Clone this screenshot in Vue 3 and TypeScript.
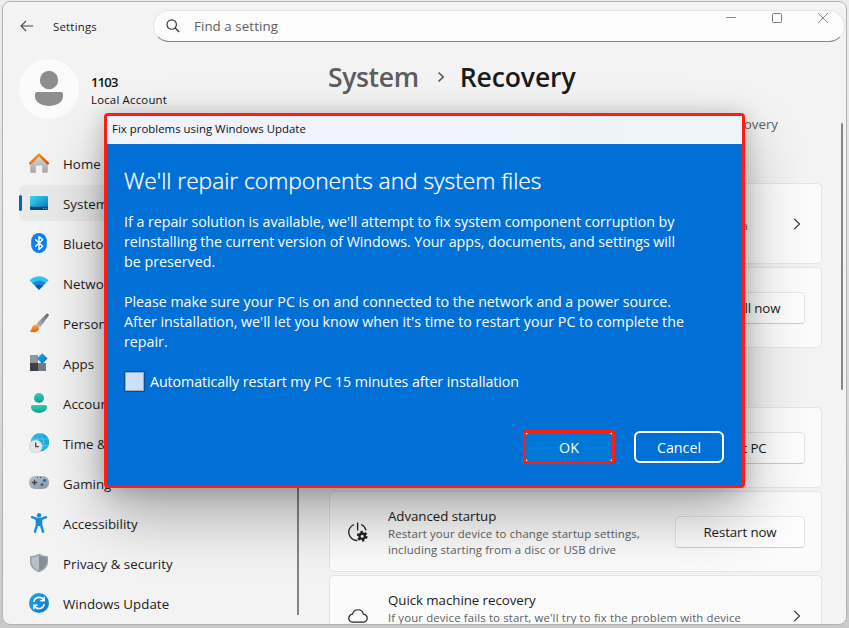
<script setup lang="ts">
interface NavItem {
  id: string
  label: string
  active?: boolean
}

interface RecoveryCard {
  id: string
  title: string
  lines: string[]
  action?: string
}

const navItems: NavItem[] = [
  { id: 'home', label: 'Home' },
  { id: 'system', label: 'System', active: true },
  { id: 'bluetooth', label: 'Bluetooth & devices' },
  { id: 'network', label: 'Network & internet' },
  { id: 'personal', label: 'Personalization' },
  { id: 'apps', label: 'Apps' },
  { id: 'accounts', label: 'Accounts' },
  { id: 'time', label: 'Time & language' },
  { id: 'gaming', label: 'Gaming' },
  { id: 'access', label: 'Accessibility' },
  { id: 'privacy', label: 'Privacy & security' },
  { id: 'update', label: 'Windows Update' },
]

const topCards: RecoveryCard[] = [
  {
    id: 'fix',
    title: 'Fix problems without resetting your PC',
    lines: ['Resetting can take a while. First, try resolving issues by running a', 'troubleshooter'],
  },
  {
    id: 'reinstall',
    title: 'Fix problems using Windows Update',
    lines: ['Reinstall your current version of', 'Windows'],
    action: 'Reinstall now',
  },
]

const bottomCards: RecoveryCard[] = [
  {
    id: 'reset',
    title: 'Reset this PC',
    lines: ['Choose to keep or remove your files,', 'then reinstall Windows'],
    action: 'Reset PC',
  },
  {
    id: 'advanced',
    title: 'Advanced startup',
    lines: ['Restart your device to change startup settings,', 'including starting from a disc or USB drive'],
    action: 'Restart now',
  },
  {
    id: 'quick',
    title: 'Quick machine recovery',
    lines: ["If your device fails to start, we'll try to fix the problem with device"],
  },
]

const groups: RecoveryCard[][] = [topCards, bottomCards]
</script>

<template>
  <div class="desktop">
    <div class="window">
      <header class="titlebar">
        <svg class="back" width="14" height="12" viewBox="0 0 14 12">
          <path d="M6 1 1 6l5 5M1 6h12.2" fill="none" stroke="#4a4a4a" stroke-width="1.1" />
        </svg>
        <span class="app-name">Settings</span>
        <div class="search">
          <svg width="14" height="14" viewBox="0 0 14 14">
            <circle cx="5.7" cy="5.5" r="4.7" fill="none" stroke="#333" stroke-width="1.15" />
            <path d="m9.2 9 4 4" stroke="#333" stroke-width="1.2" />
          </svg>
          <span>Find a setting</span>
        </div>
      </header>

      <div class="controls">
        <svg width="10" height="10" viewBox="0 0 10 10"><path d="M0 4.5h10" stroke="#8a8a8a" /></svg>
        <svg width="10" height="10" viewBox="0 0 10 10">
          <rect x=".5" y=".5" width="9" height="9" rx="1" fill="none" stroke="#7c7c7c" />
        </svg>
        <svg width="10" height="10" viewBox="0 0 10 10"><path d="m0 0 10 10M10 0 0 10" stroke="#8a8a8a" /></svg>
      </div>

      <div class="body">
        <aside class="sidebar">
          <div class="profile">
            <svg width="60" height="60" viewBox="0 0 60 60">
              <circle cx="30" cy="30" r="30" fill="#fbfbfb" />
              <circle cx="30" cy="21" r="9.2" fill="#8e8e8e" />
              <path d="M18 33h24q2 0 2 2v2.5C44 43.5 37 47 30 47s-14-3.500-14-9.500V35q0-2 2-2z" fill="#8e8e8e" />
            </svg>
            <div class="who">
              <span class="user">1103</span>
              <span class="kind">Local Account</span>
            </div>
          </div>

          <nav class="nav">
            <div v-for="item in navItems" :key="item.id" class="nav-item" :class="{ active: item.active }">
              <svg class="nav-icon" width="20" height="20" viewBox="0 0 20 20">
                <defs>
                  <linearGradient id="roof" x1="0" y1="0" x2="1" y2="1">
                    <stop offset="0" stop-color="#ffa21a" /><stop offset="1" stop-color="#d8480a" />
                  </linearGradient>
                  <linearGradient id="wall" x1="0" y1="0" x2="0" y2="1">
                    <stop offset="0" stop-color="#dadada" /><stop offset="1" stop-color="#a6a6a6" />
                  </linearGradient>
                  <linearGradient id="screen" x1="0" y1="0" x2="1" y2="1">
                    <stop offset="0" stop-color="#3cdcec" /><stop offset="1" stop-color="#0a6cc2" />
                  </linearGradient>
                  <linearGradient id="teal" x1="0" y1="0" x2="0" y2="1">
                    <stop offset="0" stop-color="#2fcfb4" /><stop offset="1" stop-color="#12a08c" />
                  </linearGradient>
                  <linearGradient id="globe" x1="1" y1="0" x2="0" y2="1">
                    <stop offset="0" stop-color="#1a9be2" /><stop offset=".6" stop-color="#22b8dc" /><stop offset="1" stop-color="#0b62b8" />
                  </linearGradient>
                  <linearGradient id="metal" x1="0" y1="0" x2="1" y2="1">
                    <stop offset="0" stop-color="#bcc3ca" /><stop offset="1" stop-color="#8b949e" />
                  </linearGradient>
                  <linearGradient id="sky" x1="0" y1="0" x2="1" y2="1">
                    <stop offset="0" stop-color="#20a4ea" /><stop offset="1" stop-color="#0b76cf" />
                  </linearGradient>
                  <linearGradient id="handle" x1="0" y1="1" x2="1" y2="0">
                    <stop offset="0" stop-color="#b9c2cc" /><stop offset="1" stop-color="#5c666f" />
                  </linearGradient>
                  <linearGradient id="bristle" x1="0" y1="0" x2="0" y2="1">
                    <stop offset="0" stop-color="#ffab2e" /><stop offset="1" stop-color="#e8560f" />
                  </linearGradient>
                </defs>
                <template v-if="item.id === 'home'">
                  <path d="M1.200 9 10 1.800 18.800 9v10q0 .8-.8.8h-4.800v-6.300q0-1-1-1H7.800q-1 0-1 1v6.300H2q-.8 0-.8-.8z" fill="url(#wall)" />
                  <path d="M1.200 10.300 10 1.700l8.800 8.600" fill="none" stroke="url(#roof)" stroke-width="2.500" stroke-linecap="round" stroke-linejoin="round" />
                </template>
                <template v-else-if="item.id === 'system'">
                  <rect x="1" y="3" width="18" height="14" rx="1.200" fill="url(#screen)" />
                  <path d="M1 13.800h18v2q0 1.200-1.200 1.200H2.200Q1 17 1 15.800z" fill="#0b466f" />
                  <path d="M14 15.400h1.200m1.300 0h1.200" stroke="#7fc6e8" />
                </template>
                <template v-else-if="item.id === 'bluetooth'">
                  <rect x="2.200" width="15.600" height="20" rx="7.800" fill="#0a80f2" />
                  <path d="m6.100 6.300 7.600 7-3.700 3.200V3.500l3.700 3.200-7.600 7" fill="none" stroke="#fff" stroke-width="1.400" stroke-linejoin="round" />
                </template>
                <template v-else-if="item.id === 'network'">
                  <path d="M.4 7.200q9.600-8 19.200 0L10 16.800z" fill="#32c3f3" />
                  <path d="M3.300 10.100q6.700-5.300 13.400 0L10 16.800z" fill="#1688df" />
                  <path d="M6.200 13q3.800-3 7.600 0L10 16.800z" fill="#0a56ad" />
                </template>
                <template v-else-if="item.id === 'personal'">
                  <path d="M7.200 11 17.300.9q1.200-.8 2 0t.2 2L11 14.500z" fill="url(#handle)" />
                  <path d="M.8 18.300c2-.6 1.600-3.600 3-5.200 1.500-1.700 4.200-1.600 5.500-.1 1.300 1.600 1.100 4-.9 5.300-2.200 1.300-5.300 1.300-7.600 0z" fill="url(#bristle)" />
                </template>
                <template v-else-if="item.id === 'apps'">
                  <rect x="1" y="2" width="8" height="8" fill="#8f969e" />
                  <rect x="1" y="10" width="8" height="8" fill="#3d4146" />
                  <rect x="9" y="10" width="8" height="8" fill="#737a82" />
                  <path d="m13.300.2 5.400 5.400-5.400 5.400-5.400-5.400z" fill="url(#sky)" />
                </template>
                <template v-else-if="item.id === 'accounts'">
                  <circle cx="10" cy="5" r="5" fill="url(#teal)" />
                  <path d="M3.800 12h12.400q1.800 0 1.800 1.800C18 17.800 14 20 10 20s-8-2.200-8-6.200Q2 12 3.800 12z" fill="url(#teal)" />
                </template>
                <template v-else-if="item.id === 'time'">
                  <circle cx="11" cy="9.200" r="9.200" fill="url(#globe)" />
                  <path d="M2.500 6h17M2.500 12.500h17M11 0Q3.800 9 11 18.400M11 0q7.200 9 0 18.400" fill="none" stroke="#7bdcf5" stroke-width=".5" />
                  <circle cx="6.600" cy="13.400" r="6.500" fill="#e4e6e8" stroke="#c3c7ca" stroke-width=".5" />
                  <path d="M6.700 9.500v4.200h3.100" fill="none" stroke="#3b4046" stroke-width="1.200" />
                </template>
                <template v-else-if="item.id === 'gaming'">
                  <rect y="3" width="20" height="13" rx="6" fill="url(#metal)" />
                  <path d="M5.500 6.800v5.400M2.800 9.500h5.400" stroke="#3e444a" stroke-width="1.300" />
                  <circle cx="15.500" cy="7.400" r="1.600" fill="#0c76d6" />
                  <circle cx="13" cy="11.600" r="1.600" fill="#0c76d6" />
                  <path d="M8 4.500h1m2 0h1" stroke="#444" />
                </template>
                <template v-else-if="item.id === 'access'">
                  <circle cx="10" cy="2.300" r="2.200" fill="url(#sky)" />
                  <path d="M8 5.500h4v7.200H8z" fill="#148bdc" />
                  <path d="M3 4.200 8 6h4l5-1.800M10 6v6M7.900 6.200v6L6 18.700M12.100 6.200v6l1.900 6.500" fill="none" stroke="#148bdc" stroke-width="2.400" stroke-linecap="round" stroke-linejoin="round" />
                </template>
                <template v-else-if="item.id === 'privacy'">
                  <path d="M10 .8q4 2.400 9 2.500v5.500c0 5-3.800 8.600-9 10.500-5.200-1.900-9-5.500-9-10.500V3.300q5-.1 9-2.500z" fill="#99a1a9" />
                  <path d="M10 2.600q3.500 2 7.400 2.200v4c0 4-2.900 7-7.400 8.800z" fill="#858d96" />
                  <path d="M10 2.600Q6.500 4.600 2.600 4.800v4c0 4 2.900 7 7.400 8.800z" fill="#b9c0c7" />
                </template>
                <template v-else>
                  <circle cx="10" cy="10" r="10" fill="url(#sky)" />
                  <path d="M4.800 8.900A5.400 5.400 0 0 1 14.700 7M15.200 11.100A5.400 5.400 0 0 1 5.300 13" fill="none" stroke="#fff" stroke-width="1.600" />
                  <path d="M15.200 3.800v3.900h-3.900M4.800 16.200v-3.900h3.900" fill="none" stroke="#fff" stroke-width="1.500" />
                </template>
              </svg>
              <span>{{ item.label }}</span>
            </div>
          </nav>
        </aside>

        <div class="divider"></div>

        <main class="content">
          <h1 class="crumbs">
            <span class="parent">System</span>
            <svg width="8" height="12" viewBox="0 0 8 12">
              <path d="m1.500 1.500 4.700 4.500-4.700 4.500" fill="none" stroke="#5b5b5b" stroke-width="1.700" />
            </svg>
            <span class="current">Recovery</span>
          </h1>
          <p class="intro">If you're having problems with your PC, these might help with recovery</p>

          <section v-for="(group, index) in groups" :key="index" class="group">
            <article v-for="card in group" :key="card.id" class="card" :class="card.id">
              <svg class="card-icon" width="20" height="20" viewBox="0 0 20 20">
                <template v-if="card.id === 'quick'">
                  <path d="M5 16.200a4 4 0 0 1-.4-8A5.500 5.500 0 0 1 15.400 8.200a4 4 0 0 1-.4 8z" fill="none" stroke="#222" stroke-width="1.200" />
                </template>
                <template v-else>
                  <path d="M9.600.5v8M6 2.500a8.300 8.300 0 0 0 3.400 16M13.200 2.500a8.500 8.500 0 0 1 4.800 5.800" fill="none" stroke="#222" stroke-width="1.300" />
                  <circle cx="14.200" cy="14.200" r="4.100" fill="none" stroke="#222" stroke-width="2.600" stroke-dasharray="2.150 2.144" />
                  <circle cx="14.200" cy="14.200" r="2.700" fill="none" stroke="#222" stroke-width="2.300" />
                </template>
              </svg>
              <div class="card-text">
                <span class="card-title">{{ card.title }}</span>
                <span v-for="line in card.lines" :key="line" class="card-line">{{ line }}</span>
              </div>
              <button v-if="card.action" class="action" type="button">{{ card.action }}</button>
              <svg v-else class="chevron" width="8" height="12" viewBox="0 0 8 12">
                <path d="m1.300.8 5.200 5.200-5.200 5.200" fill="none" stroke="#333" stroke-width="1.200" />
              </svg>
            </article>
          </section>
        </main>
      </div>
      <div class="scrollbar"></div>
    </div>

    <div class="dialog" role="dialog">
      <div class="dialog-title">Fix problems using Windows Update</div>
      <div class="dialog-body">
        <h2>We'll repair components and system files</h2>
        <p>
          <span class="snug">If a repair solution is available, we'll attempt to fix system component corruption by</span><br />
          <span class="tight">reinstalling the current version of Windows. Your apps, documents, and settings will</span><br />
          be preserved.
        </p>
        <p>
          <span class="snug">Please make sure your PC is on and connected to the network and a power source.</span><br />
          After installation, we'll let you know when it's time to restart your PC to complete the<br />
          repair.
        </p>
        <div class="check"><span class="box"></span><span>Automatically restart my PC 15 minutes after installation</span></div>
        <div class="buttons">
          <div class="mark"><button class="ok" type="button">OK</button></div>
          <button class="cancel" type="button">Cancel</button>
        </div>
      </div>
    </div>
  </div>
</template>

<style>
body {
  overflow: hidden;
}
</style>

<style scoped>
.desktop {
  position: relative;
  box-sizing: border-box;
  width: 849px;
  height: 628px;
  padding: 1px 2px 3px;
  overflow: hidden;
  background: linear-gradient(#ececec, #dedede 50%, #c9c9c9);
  font-family: 'Open Sans', 'Noto Sans', sans-serif;
  color: #1b1b1b;
}
.window {
  position: relative;
  box-sizing: border-box;
  height: 624px;
  overflow: hidden;
  border: 1px solid #b0b3b0;
  border-radius: 8px;
  background: #f3f3f3;
}
.titlebar {
  display: flex;
  align-items: center;
  height: 32px;
  padding: 8px 1px 0 17px;
}
.back {
  margin-right: 19px;
}
.app-name {
  width: 100px;
  font-size: 11.4px;
  letter-spacing: 0.22px;
}
.search {
  display: flex;
  flex: 1;
  align-items: center;
  gap: 14px;
  box-sizing: border-box;
  height: 32px;
  padding-left: 12px;
  border: 1px solid #e4e4e4;
  border-bottom-color: #868686;
  border-radius: 16px;
  background: #fcfcfc;
  color: #606060;
  font-size: 13.3px;
  letter-spacing: 0.08px;
}
.controls {
  position: absolute;
  top: 11px;
  right: 18px;
  display: flex;
  gap: 36px;
}
.body {
  display: flex;
}
.sidebar {
  width: 278px;
  padding: 17px 0 0 16px;
}
.profile {
  display: flex;
  gap: 12px;
  height: 60px;
}
.who {
  display: flex;
  flex-direction: column;
  padding-top: 14px;
  color: #111;
}
.user {
  font-size: 13px;
  font-weight: 600;
  line-height: 19px;
  letter-spacing: -0.8px;
}
.kind {
  font-size: 11.4px;
  line-height: 16px;
  letter-spacing: 0.2px;
}
.nav {
  display: flex;
  flex-direction: column;
  gap: 4px;
  padding-top: 26px;
}
.nav-item {
  display: flex;
  align-items: center;
  gap: 14px;
  height: 36px;
  padding-left: 10px;
  border-radius: 5px;
  font-size: 13.3px;
  letter-spacing: 0.04px;
  white-space: nowrap;
}
.nav-item span {
  padding-top: 1px;
}
.nav-item.active {
  background: #e9e9e9;
}
.nav-item.active::before {
  content: '';
  width: 3px;
  height: 16px;
  margin: 0 -7px 0 -10px;
  border-radius: 2px;
  background: #0067c0;
}
.nav-item.active .nav-icon {
  margin-left: -10px;
}
.nav-item.active::before {
  margin-right: 3px;
}
.divider {
  width: 2px;
  height: 493px;
  margin-top: 80px;
  background: #858585;
}
.content {
  width: 493px;
  padding: 15px 0 0 30px;
}
.crumbs {
  display: flex;
  align-items: center;
  height: 40px;
  margin: 0 0 0 -1px;
  font-size: 26.6px;
  font-weight: 600;
  line-height: 40px;
}
.crumbs svg {
  margin: 0 15px 0 18px;
}
.parent {
  color: #5d5d5d;
  letter-spacing: -0.4px;
}
.current {
  letter-spacing: -0.14px;
}
.intro {
  width: 449px;
  margin: 17px 0 0;
  color: #5f5f5f;
  font-size: 13.3px;
  line-height: 20px;
  text-align: right;
  white-space: nowrap;
}
.group {
  display: flex;
  flex-direction: column;
  gap: 3px;
  margin-top: 49px;
}
.group + .group {
  margin-top: 59px;
}
.card {
  display: flex;
  align-items: center;
  box-sizing: border-box;
  height: 81px;
  padding: 0 16px 0 18px;
  border: 1px solid #e5e5e5;
  border-radius: 5px;
  background: #fbfbfb;
}
.card-icon {
  margin-right: 20px;
}
.card-text {
  display: flex;
  flex: 1;
  flex-direction: column;
  min-height: 52px;
  white-space: nowrap;
}
.fix .card-text {
  flex: none;
  width: 360px;
  margin-right: auto;
}
.fix .card-title + .card-line {
  text-align: right;
}
.card-title {
  font-size: 13.3px;
  line-height: 20px;
  letter-spacing: -0.05px;
}
.card-line {
  color: #606060;
  font-size: 11.4px;
  line-height: 16px;
  letter-spacing: 0.13px;
}
.action {
  box-sizing: border-box;
  width: 130px;
  height: 32px;
  padding: 0;
  border: 1px solid #e5e5e5;
  border-bottom-color: #cccccc;
  border-radius: 4px;
  background: #fdfdfd;
  color: #1b1b1b;
  font: 13.3px 'Open Sans', 'Noto Sans', sans-serif;
  letter-spacing: -0.1px;
}
.chevron {
  margin-right: 4px;
}
.scrollbar {
  position: absolute;
  top: 121px;
  right: 3px;
  width: 2px;
  height: 267px;
  border-radius: 1px;
  background: #868686;
}
.dialog {
  position: absolute;
  top: 113px;
  left: 104px;
  box-sizing: border-box;
  width: 641px;
  height: 375px;
  border: 3px solid #ff1d12;
  border-radius: 4px;
  background: #0070d7;
  box-shadow: 0 28px 60px rgba(0, 0, 0, 0.3), 0 2px 21px rgba(0, 0, 0, 0.19);
}
.dialog-title {
  height: 28px;
  padding-left: 5px;
  background: linear-gradient(90deg, #f0f3fc 55%, #eef4f8 85%);
  color: #111;
  font-size: 11.4px;
  line-height: 26px;
  letter-spacing: 0.02px;
}
.dialog-body {
  padding: 22px 18px 0 17px;
  color: #fff;
  font-size: 14.25px;
  line-height: 20px;
}
.dialog-body h2 {
  margin: 0 0 16px;
  font-size: 22.8px;
  font-weight: 300;
  line-height: 30px;
  letter-spacing: -0.03px;
  -webkit-text-stroke: 0.3px #fff;
}
.dialog-body p {
  margin: 0 0 20px;
  white-space: nowrap;
}
.snug {
  letter-spacing: -0.025px;
}
.tight {
  letter-spacing: -0.054px;
}
.check {
  display: flex;
  align-items: center;
  gap: 5px;
  height: 21px;
  margin-top: -1px;
  letter-spacing: -0.087px;
}
.box {
  box-sizing: border-box;
  width: 21px;
  height: 21px;
  border: 1px solid #0b4f93;
  background: #cce1f7;
  box-shadow: inset 0 0 0 1px #96aac0;
}
.buttons {
  display: flex;
  align-items: center;
  justify-content: flex-end;
  gap: 19px;
  margin-top: 38px;
}
.buttons button {
  box-sizing: border-box;
  padding: 2px 0 0;
  color: #fff;
  font: 14.25px/20px 'Open Sans', 'Noto Sans', sans-serif;
}
.mark {
  box-sizing: border-box;
  width: 92px;
  height: 34px;
  border: 3px solid #ff1d12;
  border-radius: 3px;
  background: #fff;
}
.ok {
  display: block;
  width: 86px;
  height: 28px;
  border: 0;
  border-radius: 3px;
  background: #0078d7;
}
.cancel {
  width: 90px;
  height: 32px;
  border: 2px solid #fff;
  border-radius: 6px;
  background: transparent;
}
</style>
